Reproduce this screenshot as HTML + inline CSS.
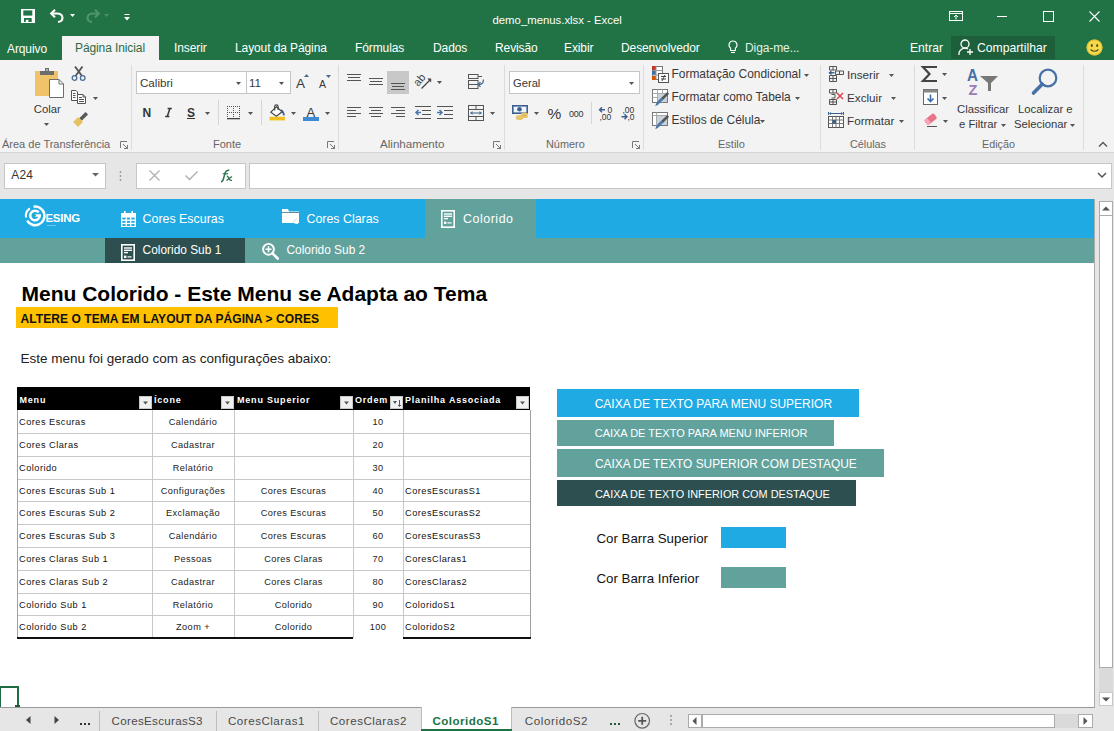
<!DOCTYPE html>
<html><head><meta charset="utf-8">
<style>
*{margin:0;padding:0;box-sizing:border-box}
html,body{width:1114px;height:731px;overflow:hidden;background:#fff;font-family:"Liberation Sans",sans-serif}
.a{position:absolute}
.t{position:absolute;white-space:nowrap;line-height:1}
svg{overflow:visible}
</style></head><body>
<div class="a" style="left:0px;top:0px;width:1114px;height:60px;background:#217346;"></div>
<div class="t " style="left:492.5px;top:14.99px;font-size:11.35px;color:#fff;font-weight:normal;">demo_menus.xlsx - Excel</div>
<svg class="a" style="left:21px;top:9px" width="14" height="14" viewBox="0 0 14 14"><rect x="0" y="0" width="14" height="14" fill="#fff"/><rect x="2.3" y="1.4" width="9" height="5.2" fill="#217346"/><rect x="3" y="9" width="7.7" height="4" fill="#217346"/><rect x="4.8" y="10.8" width="2.6" height="2.2" fill="#fff"/></svg>
<svg class="a" style="left:50px;top:9px" width="15" height="13" viewBox="0 0 15 13"><path d="M1.5 4.5H7.5A5.5 4.3 0 0 1 8 13" fill="none" stroke="#fff" stroke-width="2.1"/><path d="M5 0.8L1.2 4.5L5 8.2" fill="none" stroke="#fff" stroke-width="2.1"/></svg>
<svg class="a" style="left:69.5px;top:14px" width="5" height="3" viewBox="0 0 5 3"><path d="M0 0H5L2.5 3Z" fill="#fff"/></svg>
<svg class="a" style="left:84.5px;top:9px" width="15" height="13" viewBox="0 0 15 13"><path d="M13.5 4.5H7.5A5.5 4.3 0 0 0 7 13" fill="none" stroke="#4e9470" stroke-width="2.1"/><path d="M10 0.8L13.8 4.5L10 8.2" fill="none" stroke="#4e9470" stroke-width="2.1"/></svg>
<svg class="a" style="left:104px;top:14px" width="5" height="3" viewBox="0 0 5 3"><path d="M0 0H5L2.5 3Z" fill="#4f8f6a"/></svg>
<svg class="a" style="left:124px;top:14px" width="6" height="7" viewBox="0 0 6 7"><path d="M0.5 0.5H5.5" stroke="#fff" stroke-width="1"/><path d="M0 3H6L3 6.5Z" fill="#fff"/></svg>
<svg class="a" style="left:949px;top:11px" width="14" height="10" viewBox="0 0 14 10"><rect x="0.5" y="0.5" width="13" height="9" fill="none" stroke="#fff"/><path d="M0.5 2.5H13.5" stroke="#fff"/><path d="M7 8.5V4M5 6L7 4L9 6" fill="none" stroke="#fff"/></svg>
<div class="a" style="left:997px;top:16px;width:10px;height:1px;background:#fff;"></div>
<svg class="a" style="left:1043px;top:11px" width="11" height="11" viewBox="0 0 11 11"><rect x="0.5" y="0.5" width="10" height="10" fill="none" stroke="#fff"/></svg>
<svg class="a" style="left:1089px;top:11px" width="11" height="11" viewBox="0 0 11 11"><path d="M0.5 0.5L10.5 10.5M10.5 0.5L0.5 10.5" stroke="#fff" stroke-width="1.1"/></svg>
<div class="a" style="left:62px;top:36px;width:97px;height:24px;background:#f3f3f3;"></div>
<div class="t " style="left:7px;top:42.54px;font-size:12px;color:#fff;font-weight:normal;letter-spacing:-0.1px">Arquivo</div>
<div class="t " style="left:75px;top:41.64px;font-size:12px;color:#2e6a48;font-weight:normal;letter-spacing:-0.1px">Página Inicial</div>
<div class="t " style="left:174px;top:41.64px;font-size:12px;color:#fff;font-weight:normal;letter-spacing:-0.1px">Inserir</div>
<div class="t " style="left:235px;top:41.64px;font-size:12px;color:#fff;font-weight:normal;letter-spacing:-0.1px">Layout da Página</div>
<div class="t " style="left:355px;top:41.64px;font-size:12px;color:#fff;font-weight:normal;letter-spacing:-0.1px">Fórmulas</div>
<div class="t " style="left:433px;top:41.64px;font-size:12px;color:#fff;font-weight:normal;letter-spacing:-0.1px">Dados</div>
<div class="t " style="left:495px;top:41.64px;font-size:12px;color:#fff;font-weight:normal;letter-spacing:-0.1px">Revisão</div>
<div class="t " style="left:564px;top:41.64px;font-size:12px;color:#fff;font-weight:normal;letter-spacing:-0.1px">Exibir</div>
<div class="t " style="left:621px;top:41.64px;font-size:12px;color:#fff;font-weight:normal;letter-spacing:-0.1px">Desenvolvedor</div>
<div class="t " style="left:745px;top:41.64px;font-size:12px;color:#e0f0e6;font-weight:normal;letter-spacing:-0.1px">Diga-me...</div>
<svg class="a" style="left:728px;top:40px" width="10" height="14" viewBox="0 0 10 14"><path d="M5 1A4 4 0 0 0 2.6 8.2V10.5H7.4V8.2A4 4 0 0 0 5 1Z" fill="none" stroke="#fff" stroke-width="1.1"/><path d="M3 12.5H7" stroke="#fff" stroke-width="1.1"/></svg>
<div class="t " style="left:910px;top:41.96px;font-size:12.1px;color:#fff;font-weight:normal;">Entrar</div>
<div class="a" style="left:951px;top:36px;width:104px;height:23px;background:#1c5f3a;"></div>
<svg class="a" style="left:958px;top:39px" width="16" height="17" viewBox="0 0 16 17"><circle cx="7" cy="5" r="4" fill="none" stroke="#fff" stroke-width="1.3"/><path d="M1 16A6 6 0 0 1 10 10" fill="none" stroke="#fff" stroke-width="1.3"/><path d="M12 10V16M9 13H15" stroke="#fff" stroke-width="1.3"/></svg>
<div class="t " style="left:977px;top:42.37px;font-size:12.2px;color:#fff;font-weight:normal;">Compartilhar</div>
<svg class="a" style="left:1086px;top:39px" width="17" height="17" viewBox="0 0 17 17"><circle cx="8.5" cy="8.5" r="8" fill="#f5d94a"/><circle cx="8.5" cy="8.5" r="7.6" fill="none" stroke="#d9b52a" stroke-width="0.8"/><ellipse cx="5.8" cy="6.5" rx="1" ry="1.5" fill="#5a4a1a"/><ellipse cx="11.2" cy="6.5" rx="1" ry="1.5" fill="#5a4a1a"/><path d="M4.5 10.5Q8.5 14 12.5 10.5" fill="none" stroke="#5a4a1a" stroke-width="1.1"/></svg>
<div class="a" style="left:0px;top:60px;width:1114px;height:93px;background:#f3f3f3;"></div>
<div class="a" style="left:0px;top:152px;width:1114px;height:1px;background:#d4d4d4;"></div>
<div class="a" style="left:131px;top:65px;width:1px;height:85px;background:#dcdcdc;"></div>
<div class="a" style="left:338px;top:65px;width:1px;height:85px;background:#dcdcdc;"></div>
<div class="a" style="left:504px;top:65px;width:1px;height:85px;background:#dcdcdc;"></div>
<div class="a" style="left:643px;top:65px;width:1px;height:85px;background:#dcdcdc;"></div>
<div class="a" style="left:820px;top:65px;width:1px;height:85px;background:#dcdcdc;"></div>
<div class="a" style="left:914px;top:65px;width:1px;height:85px;background:#dcdcdc;"></div>
<div class="a" style="left:1083px;top:65px;width:1px;height:85px;background:#dcdcdc;"></div>
<div class="t " style="left:2px;top:138.69px;font-size:11px;color:#666;font-weight:normal;">Área de Transferência</div>
<div class="t " style="left:213px;top:138.69px;font-size:11px;color:#666;font-weight:normal;">Fonte</div>
<div class="t " style="left:380px;top:138.18px;font-size:11.6px;color:#666;font-weight:normal;">Alinhamento</div>
<div class="t " style="left:546px;top:138.77px;font-size:10.9px;color:#666;font-weight:normal;">Número</div>
<div class="t " style="left:718px;top:138.69px;font-size:11px;color:#666;font-weight:normal;">Estilo</div>
<div class="t " style="left:850px;top:138.86px;font-size:10.8px;color:#666;font-weight:normal;">Células</div>
<div class="t " style="left:982px;top:138.86px;font-size:10.8px;color:#666;font-weight:normal;">Edição</div>
<svg class="a" style="left:120px;top:141px" width="8" height="8" viewBox="0 0 8 8"><path d="M0.5 7V0.5H7" fill="none" stroke="#777"/><path d="M3 3L7.5 7.5M7.5 4V7.5H4" fill="none" stroke="#777"/></svg>
<svg class="a" style="left:327px;top:141px" width="8" height="8" viewBox="0 0 8 8"><path d="M0.5 7V0.5H7" fill="none" stroke="#777"/><path d="M3 3L7.5 7.5M7.5 4V7.5H4" fill="none" stroke="#777"/></svg>
<svg class="a" style="left:493px;top:141px" width="8" height="8" viewBox="0 0 8 8"><path d="M0.5 7V0.5H7" fill="none" stroke="#777"/><path d="M3 3L7.5 7.5M7.5 4V7.5H4" fill="none" stroke="#777"/></svg>
<svg class="a" style="left:632px;top:141px" width="8" height="8" viewBox="0 0 8 8"><path d="M0.5 7V0.5H7" fill="none" stroke="#777"/><path d="M3 3L7.5 7.5M7.5 4V7.5H4" fill="none" stroke="#777"/></svg>
<svg class="a" style="left:35px;top:68px" width="29" height="30" viewBox="0 0 29 30"><rect x="0" y="3" width="23" height="25" fill="#f0c26a"/><rect x="5" y="3" width="14" height="4" fill="#6d6d6d"/><rect x="10" y="0" width="4" height="4" fill="#6d6d6d"/><rect x="11.3" y="1.3" width="1.4" height="1.4" fill="#f3f3f3"/><path d="M14.5 11.5H24L28.5 16V29.5H14.5Z" fill="#fff" stroke="#6d6d6d"/><path d="M24 11.5V16H28.5" fill="none" stroke="#6d6d6d"/></svg>
<div class="t " style="left:33.8px;top:103.63px;font-size:11.3px;color:#383838;font-weight:normal;">Colar</div>
<svg class="a" style="left:44px;top:123px" width="5" height="3" viewBox="0 0 5 3"><path d="M0 0H5L2.5 3Z" fill="#555"/></svg>
<svg class="a" style="left:71px;top:66px" width="16" height="16" viewBox="0 0 16 16"><path d="M4 0.5L11 10M11.5 0.5L4.5 10" stroke="#555" stroke-width="1.9"/><circle cx="3.5" cy="12" r="2.3" fill="#f3f3f3" stroke="#4a6e94" stroke-width="1.3"/><circle cx="11.7" cy="12" r="2.3" fill="#f3f3f3" stroke="#4a6e94" stroke-width="1.3"/></svg>
<svg class="a" style="left:71px;top:90px" width="16" height="15" viewBox="0 0 16 15"><path d="M0.5 0.5H5L6.5 2V10.5H0.5Z" fill="#fff" stroke="#555"/><path d="M2 3.5H4.5M2 5.5H4.5M2 7.5H4.5" stroke="#555"/><path d="M6.5 4.5H12L14.5 7V13.5H6.5Z" fill="#fff" stroke="#555"/><path d="M12 4.5V7H14.5" fill="none" stroke="#555"/><path d="M8 7.5H11M8 9.5H13M8 11.5H13" stroke="#555"/></svg>
<svg class="a" style="left:93px;top:97px" width="5" height="3" viewBox="0 0 5 3"><path d="M0 0H5L2.5 3Z" fill="#555"/></svg>
<svg class="a" style="left:71px;top:112px" width="17" height="16" viewBox="0 0 17 16"><path d="M15.8 1.2L9.5 7.5" stroke="#5a5a5a" stroke-width="3.6"/><path d="M11.97 9.97L7.03 5.03L2.08 9.98L7.02 14.92Z" fill="#e6c262"/></svg>
<div class="a" style="left:136px;top:71px;width:111px;height:23px;background:#fff;border:1px solid #c6c6c6"></div>
<div class="a" style="left:246px;top:71px;width:45px;height:23px;background:#fff;border:1px solid #c6c6c6"></div>
<div class="t " style="left:140px;top:77.18px;font-size:11.6px;color:#383838;font-weight:normal;">Calibri</div>
<div class="t " style="left:249px;top:77.18px;font-size:11.6px;color:#383838;font-weight:normal;">11</div>
<svg class="a" style="left:236px;top:82px" width="5" height="3" viewBox="0 0 5 3"><path d="M0 0H5L2.5 3Z" fill="#555"/></svg>
<svg class="a" style="left:279px;top:82px" width="5" height="3" viewBox="0 0 5 3"><path d="M0 0H5L2.5 3Z" fill="#555"/></svg>
<div class="t " style="left:296px;top:76.57px;font-size:13.5px;color:#383838;font-weight:normal;">A</div>
<svg class="a" style="left:304px;top:74px" width="5" height="3" viewBox="0 0 5 3"><path d="M0 3H5L2.5 0Z" fill="#4a6a8a"/></svg>
<div class="t " style="left:319px;top:79.11px;font-size:10.5px;color:#383838;font-weight:normal;">A</div>
<svg class="a" style="left:326px;top:75px" width="5" height="3" viewBox="0 0 5 3"><path d="M0 0H5L2.5 3Z" fill="#4a6a8a"/></svg>
<div class="t " style="left:142.5px;top:106.84px;font-size:12px;color:#333;font-weight:bold;">N</div>
<svg class="a" style="left:165px;top:108px" width="7" height="9" viewBox="0 0 7 9"><path d="M2.6 0.5H6.8M0.2 8.5H4.4M4.9 0.5L2.3 8.5" stroke="#383838" stroke-width="1.5"/></svg>
<div class="t " style="left:187px;top:106.84px;font-size:12px;color:#333;font-weight:bold;">S</div>
<div class="a" style="left:187px;top:118px;width:8px;height:1px;background:#333;"></div>
<svg class="a" style="left:205px;top:112px" width="5" height="3" viewBox="0 0 5 3"><path d="M0 0H5L2.5 3Z" fill="#555"/></svg>
<div class="a" style="left:218px;top:100px;width:1px;height:25px;background:#d6d6d6;"></div>
<svg class="a" style="left:227px;top:106px" width="14" height="14" viewBox="0 0 14 14"><rect x="0" y="0" width="1" height="1" fill="#555"/><rect x="6" y="0" width="1" height="1" fill="#555"/><rect x="12" y="0" width="1" height="1" fill="#555"/><rect x="0" y="2" width="1" height="1" fill="#555"/><rect x="6" y="2" width="1" height="1" fill="#555"/><rect x="12" y="2" width="1" height="1" fill="#555"/><rect x="0" y="4" width="1" height="1" fill="#555"/><rect x="6" y="4" width="1" height="1" fill="#555"/><rect x="12" y="4" width="1" height="1" fill="#555"/><rect x="0" y="6" width="1" height="1" fill="#555"/><rect x="6" y="6" width="1" height="1" fill="#555"/><rect x="12" y="6" width="1" height="1" fill="#555"/><rect x="0" y="8" width="1" height="1" fill="#555"/><rect x="6" y="8" width="1" height="1" fill="#555"/><rect x="12" y="8" width="1" height="1" fill="#555"/><rect x="0" y="10" width="1" height="1" fill="#555"/><rect x="6" y="10" width="1" height="1" fill="#555"/><rect x="12" y="10" width="1" height="1" fill="#555"/><rect x="2" y="0" width="1" height="1" fill="#555"/><rect x="4" y="0" width="1" height="1" fill="#555"/><rect x="8" y="0" width="1" height="1" fill="#555"/><rect x="10" y="0" width="1" height="1" fill="#555"/><rect x="2" y="6" width="1" height="1" fill="#555"/><rect x="4" y="6" width="1" height="1" fill="#555"/><rect x="8" y="6" width="1" height="1" fill="#555"/><rect x="10" y="6" width="1" height="1" fill="#555"/><rect x="0" y="12" width="13" height="1.3" fill="#444"/></svg>
<svg class="a" style="left:248px;top:112px" width="5" height="3" viewBox="0 0 5 3"><path d="M0 0H5L2.5 3Z" fill="#555"/></svg>
<div class="a" style="left:261px;top:100px;width:1px;height:25px;background:#d6d6d6;"></div>
<svg class="a" style="left:269px;top:104px" width="17" height="17" viewBox="0 0 17 17"><path d="M1.9 8.2L7.4 2.7L13.1 7.7L7.4 12.2Z" fill="#fff" stroke="#444" stroke-width="1.2"/><path d="M5.7 6.5V2.6A1.7 1.7 0 0 1 9.1 2.6V6" fill="none" stroke="#444" stroke-width="1.2"/><path d="M12.3 5.2Q15.6 6.8 15.8 11.6H14.3Q13.8 9 12 7.5Z" fill="#3b5f8f"/><rect x="0.5" y="12.8" width="15.5" height="3.6" fill="#f0c020"/></svg>
<svg class="a" style="left:291px;top:112px" width="5" height="3" viewBox="0 0 5 3"><path d="M0 0H5L2.5 3Z" fill="#555"/></svg>
<div class="t " style="left:306.5px;top:105.80px;font-size:13px;color:#383838;font-weight:normal;">A</div>
<div class="a" style="left:303px;top:117px;width:16px;height:4px;background:#3d8bd4;"></div>
<svg class="a" style="left:325px;top:112px" width="5" height="3" viewBox="0 0 5 3"><path d="M0 0H5L2.5 3Z" fill="#555"/></svg>
<svg class="a" style="left:347px;top:74px" width="15" height="9" viewBox="0 0 15 9"><rect x="0" y="0" width="14" height="1" fill="#555"/><rect x="1" y="3" width="12" height="1" fill="#555"/><rect x="0" y="6" width="14" height="1" fill="#555"/></svg>
<svg class="a" style="left:369px;top:78px" width="15" height="9" viewBox="0 0 15 9"><rect x="0" y="0" width="14" height="1" fill="#555"/><rect x="1" y="3" width="12" height="1" fill="#555"/><rect x="0" y="6" width="14" height="1" fill="#555"/></svg>
<div class="a" style="left:387px;top:71px;width:22px;height:23px;background:#c8c8c8;"></div>
<svg class="a" style="left:391px;top:83px" width="15" height="9" viewBox="0 0 15 9"><rect x="0" y="0" width="14" height="1" fill="#555"/><rect x="1" y="3" width="12" height="1" fill="#555"/><rect x="0" y="6" width="14" height="1" fill="#555"/></svg>
<svg class="a" style="left:415px;top:73px" width="17" height="17" viewBox="0 0 17 17"><text x="0" y="0" font-size="11" fill="#444" font-family="Liberation Sans" transform="translate(3.2 14) rotate(-50)">ab</text><path d="M6.5 15.5L15.5 6.5" stroke="#444" stroke-width="1.2"/><path d="M12.2 5.5H16.2V9.5Z" fill="#444"/></svg>
<svg class="a" style="left:437px;top:81px" width="5" height="3" viewBox="0 0 5 3"><path d="M0 0H5L2.5 3Z" fill="#555"/></svg>
<svg class="a" style="left:468px;top:74px" width="17" height="16" viewBox="0 0 17 16"><rect x="0.5" y="0.5" width="9.5" height="4" fill="none" stroke="#555"/><path d="M10 2.5H14" stroke="#555"/><rect x="0.5" y="6.5" width="9.5" height="8" fill="none" stroke="#555"/><path d="M0.5 10.5H10" stroke="#555"/><path d="M15.5 5.5Q15.5 10.5 11 10.5" fill="none" stroke="#4a6e94" stroke-width="1.3"/><path d="M12.5 8.3L9.8 10.5L12.5 12.7" fill="none" stroke="#4a6e94" stroke-width="1.3"/></svg>
<svg class="a" style="left:347px;top:107px" width="15" height="12" viewBox="0 0 15 12"><rect x="0" y="0" width="14" height="1" fill="#555"/><rect x="0" y="3" width="9" height="1" fill="#555"/><rect x="0" y="6" width="14" height="1" fill="#555"/><rect x="0" y="9" width="9" height="1" fill="#555"/></svg>
<svg class="a" style="left:369px;top:107px" width="15" height="12" viewBox="0 0 15 12"><rect x="0" y="0" width="14" height="1" fill="#555"/><rect x="2" y="3" width="10" height="1" fill="#555"/><rect x="0" y="6" width="14" height="1" fill="#555"/><rect x="2" y="9" width="10" height="1" fill="#555"/></svg>
<svg class="a" style="left:391px;top:107px" width="15" height="12" viewBox="0 0 15 12"><rect x="0" y="0" width="14" height="1" fill="#555"/><rect x="5" y="3" width="9" height="1" fill="#555"/><rect x="0" y="6" width="14" height="1" fill="#555"/><rect x="5" y="9" width="9" height="1" fill="#555"/></svg>
<svg class="a" style="left:415px;top:106px" width="17" height="14" viewBox="0 0 17 14"><path d="M0 0.5H16M7 4.5H16M7 8.5H16M0 12.5H16" stroke="#555"/><path d="M1 6.5H6M3.5 4L1 6.5L3.5 9" fill="none" stroke="#4a78ac" stroke-width="1.5"/></svg>
<svg class="a" style="left:437px;top:106px" width="17" height="14" viewBox="0 0 17 14"><path d="M0 0.5H16M7 4.5H16M7 8.5H16M0 12.5H16" stroke="#555"/><path d="M0 6.5H5M2.5 4L5 6.5L2.5 9" fill="none" stroke="#4a78ac" stroke-width="1.5"/></svg>
<svg class="a" style="left:468px;top:105px" width="16" height="16" viewBox="0 0 16 16"><rect x="0.5" y="0.5" width="15" height="15" fill="none" stroke="#555"/><path d="M0.5 4.5H15.5M0.5 11.5H15.5M8 0.5V4.5M8 11.5V15.5" stroke="#555"/><path d="M2.5 8H13.5" stroke="#4a6e94" stroke-width="1.1"/><path d="M4.5 6L2.2 8L4.5 10ZM11.5 6L13.8 8L11.5 10Z" fill="#4a6e94"/></svg>
<svg class="a" style="left:490px;top:112px" width="5" height="3" viewBox="0 0 5 3"><path d="M0 0H5L2.5 3Z" fill="#555"/></svg>
<div class="a" style="left:509px;top:71px;width:131px;height:23px;background:#fff;border:1px solid #c6c6c6"></div>
<div class="t " style="left:513px;top:77.52px;font-size:11.2px;color:#383838;font-weight:normal;">Geral</div>
<svg class="a" style="left:629px;top:82px" width="5" height="3" viewBox="0 0 5 3"><path d="M0 0H5L2.5 3Z" fill="#555"/></svg>
<svg class="a" style="left:512px;top:105px" width="17" height="17" viewBox="0 0 17 17"><rect x="0.8" y="0.8" width="14.4" height="7.4" fill="#eef4fa" stroke="#3b5f8f" stroke-width="1.6"/><circle cx="7.5" cy="4.3" r="2.3" fill="#3b5f8f"/><ellipse cx="12.5" cy="9" rx="3.5" ry="1.6" fill="#e8c46a"/><ellipse cx="12.5" cy="11.5" rx="3.5" ry="1.6" fill="#e8c46a"/><ellipse cx="7.5" cy="12.5" rx="3.8" ry="2.6" fill="#e8c46a"/><ellipse cx="12.5" cy="10.2" rx="3.5" ry="0.4" fill="#c9a24a"/></svg>
<svg class="a" style="left:534px;top:112px" width="5" height="3" viewBox="0 0 5 3"><path d="M0 0H5L2.5 3Z" fill="#555"/></svg>
<div class="t " style="left:547.5px;top:106.18px;font-size:15.5px;color:#383838;font-weight:normal;">%</div>
<div class="t " style="left:569px;top:109.68px;font-size:9px;color:#333;font-weight:normal;letter-spacing:-0.2px">000</div>
<div class="a" style="left:591px;top:102px;width:1px;height:22px;background:#d6d6d6;"></div>
<svg class="a" style="left:599px;top:106px" width="15" height="14" viewBox="0 0 15 14"><path d="M0.5 3.8H6M3 1.3L0.5 3.8L3 6.3" fill="none" stroke="#3b5f8f" stroke-width="1.4"/><text x="8.5" y="6.5" font-size="8.5" fill="#333" font-family="Liberation Sans">0</text><text x="0.5" y="13.5" font-size="8.5" fill="#333" font-family="Liberation Sans">,00</text></svg>
<svg class="a" style="left:621px;top:106px" width="15" height="14" viewBox="0 0 15 14"><text x="1.5" y="6.5" font-size="8.5" fill="#333" font-family="Liberation Sans">,00</text><path d="M0.5 10.8H6M3.5 8.3L6 10.8L3.5 13.3" fill="none" stroke="#3b5f8f" stroke-width="1.4"/><text x="6.5" y="13.5" font-size="8.5" fill="#333" font-family="Liberation Sans">,0</text></svg>
<svg class="a" style="left:652px;top:66px" width="17" height="17" viewBox="0 0 17 17"><rect x="0.5" y="0.5" width="10" height="13" fill="#fff" stroke="#777"/><rect x="0" y="0" width="4" height="4" fill="#c0392b"/><rect x="0" y="5" width="4" height="4" fill="#3d6fa8"/><rect x="0" y="10" width="4" height="4" fill="#d35400"/><path d="M4 0.5V13.5M0.5 4.5H10.5M0.5 9H10.5" stroke="#999"/><rect x="6.5" y="7.5" width="10" height="9" fill="#fff" stroke="#555"/><path d="M9 10.5H14M9 13H14M13 9L10 15" stroke="#444"/></svg>
<div class="t " style="left:671.5px;top:68.58px;font-size:11.95px;color:#383838;font-weight:normal;">Formatação Condicional</div>
<svg class="a" style="left:804px;top:74px" width="5" height="3" viewBox="0 0 5 3"><path d="M0 0H5L2.5 3Z" fill="#555"/></svg>
<svg class="a" style="left:652px;top:89px" width="18" height="18" viewBox="0 0 18 18"><rect x="0.5" y="0.5" width="15" height="13" fill="#fff" stroke="#777"/><path d="M0.5 4.5H15.5M0.5 8.5H15.5M5.5 0.5V13.5M10.5 0.5V13.5" stroke="#aaa"/><rect x="6" y="5" width="9" height="8" fill="#c9d3de"/><path d="M16.2 3.8L10 10" stroke="#555" stroke-width="2.6"/><path d="M11.2 10.8L7.8 14Q6 16.5 3.2 17.2Q3.8 14 6.2 11.5L9.2 8.8Z" fill="#4a78a8"/></svg>
<div class="t " style="left:671.5px;top:91.88px;font-size:11.95px;color:#383838;font-weight:normal;">Formatar como Tabela</div>
<svg class="a" style="left:795px;top:97px" width="5" height="3" viewBox="0 0 5 3"><path d="M0 0H5L2.5 3Z" fill="#555"/></svg>
<svg class="a" style="left:652px;top:112px" width="18" height="18" viewBox="0 0 18 18"><rect x="0.5" y="0.5" width="15" height="13" fill="#fff" stroke="#777"/><rect x="5" y="4" width="10" height="9" fill="#c9d3de"/><path d="M0.5 3.5H15.5M4.5 0.5V13.5" stroke="#aaa"/><path d="M16.2 3.8L10 10" stroke="#555" stroke-width="2.6"/><path d="M11.2 10.8L7.8 14Q6 16.5 3.2 17.2Q3.8 14 6.2 11.5L9.2 8.8Z" fill="#4a78a8"/></svg>
<div class="t " style="left:671.5px;top:114.88px;font-size:11.95px;color:#383838;font-weight:normal;">Estilos de Célula</div>
<svg class="a" style="left:760px;top:120px" width="5" height="3" viewBox="0 0 5 3"><path d="M0 0H5L2.5 3Z" fill="#555"/></svg>
<svg class="a" style="left:828px;top:66px" width="16" height="16" viewBox="0 0 16 16"><path d="M1.5 0.5H8.5V4H1.5ZM5 0.5V4M7.5 5H15.5V8.5H7.5ZM11.5 5V8.5M1.5 9.5H8.5V15.5H1.5ZM1.5 12.5H8.5M5 9.5V15.5" fill="none" stroke="#555"/><path d="M1 6.75H6.5" stroke="#3b5f8f" stroke-width="1.4"/><path d="M3.5 4.2L0.5 6.75L3.5 9.3Z" fill="#3b5f8f"/></svg>
<div class="t " style="left:847px;top:68.80px;font-size:11.7px;color:#383838;font-weight:normal;">Inserir</div>
<svg class="a" style="left:889px;top:74px" width="5" height="3" viewBox="0 0 5 3"><path d="M0 0H5L2.5 3Z" fill="#555"/></svg>
<svg class="a" style="left:828px;top:89px" width="16" height="16" viewBox="0 0 16 16"><path d="M1.5 0.5H8.5V4H1.5ZM5 0.5V4M3.5 5.5H7V9H3.5M1.5 10.5H8.5V15.5H1.5ZM1.5 13H8.5M5 10.5V15.5" fill="none" stroke="#555"/><path d="M9 4L15 10M15 4L9 10" stroke="#d9434e" stroke-width="1.5"/></svg>
<div class="t " style="left:847px;top:92.10px;font-size:11.7px;color:#383838;font-weight:normal;">Excluir</div>
<svg class="a" style="left:891px;top:97px" width="5" height="3" viewBox="0 0 5 3"><path d="M0 0H5L2.5 3Z" fill="#555"/></svg>
<svg class="a" style="left:828px;top:112px" width="16" height="16" viewBox="0 0 16 16"><rect x="0.5" y="4.5" width="15" height="11" fill="#fff" stroke="#555"/><path d="M0.5 8H15.5M0.5 11.5H15.5M4.5 4.5V15.5M8 4.5V15.5M11.5 4.5V15.5" stroke="#777"/><rect x="4.5" y="8" width="3.5" height="3.5" fill="#3b5f8f"/><path d="M2.5 1.5H13.5" stroke="#3b5f8f"/><path d="M0.5 0V3M15.5 0V3" stroke="#3b5f8f"/><path d="M3 0L1 1.5L3 3ZM13 0L15 1.5L13 3Z" fill="#3b5f8f"/></svg>
<div class="t " style="left:847px;top:115.10px;font-size:11.7px;color:#383838;font-weight:normal;">Formatar</div>
<svg class="a" style="left:899px;top:120px" width="5" height="3" viewBox="0 0 5 3"><path d="M0 0H5L2.5 3Z" fill="#555"/></svg>
<svg class="a" style="left:922px;top:66px" width="16" height="16" viewBox="0 0 16 16"><path d="M15 1H1L7.5 8L1 15H15" fill="none" stroke="#444" stroke-width="2.2" stroke-linejoin="miter"/></svg>
<svg class="a" style="left:942px;top:73px" width="5" height="3" viewBox="0 0 5 3"><path d="M0 0H5L2.5 3Z" fill="#555"/></svg>
<svg class="a" style="left:923px;top:89px" width="15" height="16" viewBox="0 0 15 16"><rect x="0.5" y="0.5" width="14" height="15" fill="#fff" stroke="#666"/><rect x="0.5" y="0.5" width="14" height="3" fill="#888"/><path d="M7.5 5.5V12.5M4.5 9.5L7.5 12.5L10.5 9.5" fill="none" stroke="#3d6fa8" stroke-width="1.6"/></svg>
<svg class="a" style="left:942px;top:97px" width="5" height="3" viewBox="0 0 5 3"><path d="M0 0H5L2.5 3Z" fill="#555"/></svg>
<svg class="a" style="left:923px;top:112px" width="15" height="15" viewBox="0 0 15 15"><g transform="rotate(-38 7.5 7)"><rect x="1.5" y="4" width="12" height="6.5" rx="1.5" fill="#e8758a"/><rect x="1.5" y="4" width="4" height="6.5" rx="1" fill="#f3a9b6"/></g><path d="M4 14.5H14" stroke="#555"/></svg>
<svg class="a" style="left:943px;top:120px" width="5" height="3" viewBox="0 0 5 3"><path d="M0 0H5L2.5 3Z" fill="#555"/></svg>
<div class="t " style="left:967.3px;top:67.33px;font-size:16.5px;color:#4670a6;font-weight:bold;transform:scaleX(0.92);transform-origin:0 0">A</div>
<div class="t " style="left:968.5px;top:82.93px;font-size:14.5px;color:#9a7cb6;font-weight:bold;">Z</div>
<svg class="a" style="left:980px;top:76px" width="18" height="16" viewBox="0 0 18 16"><path d="M0 0H18L11 7V15H8V7Z" fill="#777"/></svg>
<div class="t " style="left:957px;top:103.63px;font-size:11.3px;color:#383838;font-weight:normal;">Classificar</div>
<div class="t " style="left:959px;top:119.43px;font-size:11.3px;color:#383838;font-weight:normal;">e Filtrar</div>
<svg class="a" style="left:1001px;top:124px" width="5" height="3" viewBox="0 0 5 3"><path d="M0 0H5L2.5 3Z" fill="#555"/></svg>
<svg class="a" style="left:1031px;top:68px" width="28" height="27" viewBox="0 0 28 27"><circle cx="17" cy="10" r="8.3" fill="none" stroke="#4670a6" stroke-width="2.2"/><path d="M11.2 16.2L2.5 25" stroke="#4670a6" stroke-width="3.6" stroke-linecap="round"/></svg>
<div class="t " style="left:1018px;top:103.63px;font-size:11.3px;color:#383838;font-weight:normal;">Localizar e</div>
<div class="t " style="left:1014px;top:119.43px;font-size:11.3px;color:#383838;font-weight:normal;">Selecionar</div>
<svg class="a" style="left:1070px;top:124px" width="5" height="3" viewBox="0 0 5 3"><path d="M0 0H5L2.5 3Z" fill="#555"/></svg>
<svg class="a" style="left:1098px;top:141px" width="10" height="6" viewBox="0 0 10 6"><path d="M1 5.5L5 1.5L9 5.5" fill="none" stroke="#555" stroke-width="1.4"/></svg>
<div class="a" style="left:0px;top:153px;width:1114px;height:46px;background:#e6e6e6;"></div>
<div class="a" style="left:4px;top:163px;width:102px;height:26px;background:#fff;border:1px solid #c6c6c6"></div>
<div class="t " style="left:11.3px;top:170.43px;font-size:11.9px;color:#333;font-weight:normal;letter-spacing:0.2px">A24</div>
<svg class="a" style="left:92px;top:173px" width="7" height="4" viewBox="0 0 7 4"><path d="M0 0H7L3.5 3.5Z" fill="#666"/></svg>
<svg class="a" style="left:119px;top:171px" width="3" height="10" viewBox="0 0 3 10"><circle cx="1.5" cy="1" r="0.9" fill="#999"/><circle cx="1.5" cy="5" r="0.9" fill="#999"/><circle cx="1.5" cy="9" r="0.9" fill="#999"/></svg>
<div class="a" style="left:136px;top:163px;width:110px;height:26px;background:#fff;border:1px solid #c6c6c6"></div>
<svg class="a" style="left:149px;top:170px" width="11" height="11" viewBox="0 0 11 11"><path d="M0.5 0.5L10.5 10.5M10.5 0.5L0.5 10.5" stroke="#b0b0b0" stroke-width="1.3"/></svg>
<svg class="a" style="left:185px;top:170px" width="13" height="11" viewBox="0 0 13 11"><path d="M0.5 5.5L4.5 9.5L12.5 1.5" fill="none" stroke="#b0b0b0" stroke-width="1.4"/></svg>
<svg class="a" style="left:220px;top:169px" width="13" height="14" viewBox="0 0 13 14"><path d="M1 12.8Q2.8 12.8 3.8 8.5L5.3 3.5Q6.3 0.8 9.3 1.3" fill="none" stroke="#2b7350" stroke-width="1.5"/><path d="M2.8 4.8H8" stroke="#2b7350" stroke-width="1.2"/><path d="M6.8 7.3Q8 7 9 9.5T12 11.3M12 7.5L6.5 11.5" fill="none" stroke="#2b7350" stroke-width="1.3"/></svg>
<div class="a" style="left:249px;top:163px;width:863px;height:26px;background:#fff;border:1px solid #c6c6c6"></div>
<svg class="a" style="left:1097px;top:172px" width="10" height="6" viewBox="0 0 10 6"><path d="M1 1L5 5L9 1" fill="none" stroke="#555" stroke-width="1.5"/></svg>
<div class="a" style="left:0px;top:199px;width:1114px;height:509px;background:#fff;"></div>
<div class="a" style="left:1095px;top:199px;width:19px;height:509px;background:#e6e6e6;"></div>
<div class="a" style="left:0px;top:199px;width:1095px;height:39px;background:#1faae4;"></div>
<div class="a" style="left:0px;top:238px;width:1095px;height:25px;background:#62a29c;"></div>
<div class="a" style="left:425px;top:199px;width:111px;height:39px;background:#62a29c;"></div>
<div class="a" style="left:105px;top:238px;width:140px;height:25px;background:#2d4f4f;"></div>
<div class="a" style="left:1094px;top:199px;width:1px;height:509px;background:#ababab;"></div>
<svg class="a" style="left:25px;top:205px" width="20" height="21" viewBox="0 0 20 21"><path d="M8.6 1.7A9.3 9.3 0 1 1 2.15 15.55" fill="none" stroke="#fff" stroke-width="2.5"/><path d="M1.04 12.5A9.3 9.3 0 0 1 4.87 3.28" fill="none" stroke="#fff" stroke-width="2.1"/><path d="M13.68 7.4A4.8 4.8 0 1 0 14.8 10.5H10" fill="none" stroke="#fff" stroke-width="2.5"/><circle cx="10" cy="10.5" r="1.1" fill="#3fae6a"/></svg>
<div class="t " style="left:45.5px;top:212.77px;font-size:11.5px;color:#fff;font-weight:bold;letter-spacing:-0.3px">ESING</div>
<div class="a" style="left:47px;top:224.5px;width:9px;height:1px;background:#6cc4ec;"></div>
<svg class="a" style="left:121px;top:211px" width="15" height="16" viewBox="0 0 15 16"><rect x="0" y="2" width="15" height="14" fill="#fff"/><rect x="3" y="0" width="1.6" height="3" fill="#fff"/><rect x="10.4" y="0" width="1.6" height="3" fill="#fff"/><rect x="1.4" y="6.6" width="3.2" height="1.9" fill="#1faae4"/><rect x="5.9" y="6.6" width="3.2" height="1.9" fill="#1faae4"/><rect x="10.4" y="6.6" width="3.2" height="1.9" fill="#1faae4"/><rect x="1.4" y="9.9" width="3.2" height="1.9" fill="#1faae4"/><rect x="5.9" y="9.9" width="3.2" height="1.9" fill="#1faae4"/><rect x="10.4" y="9.9" width="3.2" height="1.9" fill="#1faae4"/><rect x="1.4" y="13.1" width="3.2" height="1.9" fill="#1faae4"/><rect x="5.9" y="13.1" width="3.2" height="1.9" fill="#1faae4"/><rect x="10.4" y="13.1" width="3.2" height="1.9" fill="#1faae4"/></svg>
<div class="t " style="left:142.6px;top:212.90px;font-size:12.4px;color:#fff;font-weight:normal;">Cores Escuras</div>
<svg class="a" style="left:282px;top:208.5px" width="18" height="16" viewBox="0 0 18 16"><path d="M0 0H6L7 2.5H17V14H0Z" fill="#fff"/><path d="M0 3.5H17" stroke="#3f6f86" stroke-width="0.8"/><path d="M12 14.5L16 10.5V15Z" fill="#fff"/><path d="M10.5 13.5L15 9.5" stroke="#8cc" stroke-width="0.6"/></svg>
<div class="t " style="left:306.5px;top:212.90px;font-size:12.4px;color:#fff;font-weight:normal;">Cores Claras</div>
<svg class="a" style="left:441px;top:210px" width="14" height="18" viewBox="0 0 14 18"><rect x="0.8" y="0.8" width="12.4" height="16.4" fill="none" stroke="#fff" stroke-width="1.6"/><rect x="3" y="3.3" width="8" height="1.4" fill="#fff"/><rect x="3" y="5.6" width="8" height="1.4" fill="#fff"/><rect x="3" y="7.9" width="4" height="1.4" fill="#fff"/><rect x="3" y="11.6" width="2.4" height="2.4" fill="#fff"/><rect x="6.5" y="12.3" width="4" height="1.2" fill="#fff"/></svg>
<div class="t " style="left:463px;top:213.10px;font-size:12.4px;color:#fff;font-weight:normal;letter-spacing:0.55px">Colorido</div>
<svg class="a" style="left:121px;top:244px" width="14" height="17" viewBox="0 0 14 17"><rect x="0.8" y="0.8" width="12.4" height="15.4" fill="none" stroke="#fff" stroke-width="1.6"/><rect x="3" y="3.3" width="8" height="1.4" fill="#fff"/><rect x="3" y="5.6" width="8" height="1.4" fill="#fff"/><rect x="3" y="7.9" width="4" height="1.4" fill="#fff"/><rect x="3" y="11.6" width="2.4" height="2.4" fill="#fff"/><rect x="6.5" y="12.3" width="4" height="1.2" fill="#fff"/></svg>
<div class="t " style="left:142.6px;top:245.43px;font-size:11.9px;color:#fff;font-weight:normal;">Colorido Sub 1</div>
<svg class="a" style="left:262px;top:243px" width="17" height="17" viewBox="0 0 17 17"><circle cx="6.5" cy="6.3" r="5.4" fill="none" stroke="#fff" stroke-width="1.9"/><path d="M6.5 3.3V9.3M3.5 6.3H9.5" stroke="#fff" stroke-width="1.6"/><path d="M10.5 10.3L15.7 15.5" stroke="#fff" stroke-width="2.6" stroke-linecap="round"/></svg>
<div class="t " style="left:286.5px;top:245.43px;font-size:11.9px;color:#fff;font-weight:normal;">Colorido Sub 2</div>
<div class="t " style="left:21.5px;top:282.62px;font-size:21px;color:#000;font-weight:bold;">Menu Colorido - Este Menu se Adapta ao Tema</div>
<div class="a" style="left:16px;top:307px;width:322px;height:21px;background:#ffc000;"></div>
<div class="t " style="left:20.5px;top:312.64px;font-size:12px;color:#111;font-weight:bold;letter-spacing:0.07px">ALTERE O TEMA EM LAYOUT DA PÁGINA &gt; CORES</div>
<div class="t " style="left:20.5px;top:351.57px;font-size:13.5px;color:#222;font-weight:normal;">Este menu foi gerado com as configurações abaixo:</div>
<div class="a" style="left:17px;top:387px;width:513px;height:23px;background:#000;"></div>
<div class="a" style="left:152px;top:410px;width:1px;height:228px;background:#c8c8c8;"></div>
<div class="a" style="left:234px;top:410px;width:1px;height:228px;background:#c8c8c8;"></div>
<div class="a" style="left:353px;top:410px;width:1px;height:228px;background:#c8c8c8;"></div>
<div class="a" style="left:403px;top:410px;width:1px;height:228px;background:#c8c8c8;"></div>
<div class="a" style="left:17px;top:410px;width:1px;height:228px;background:#a0a0a0;"></div>
<div class="a" style="left:530px;top:410px;width:1px;height:228px;background:#a0a0a0;"></div>
<div class="a" style="left:18px;top:433px;width:512px;height:1px;background:#c8c8c8;"></div>
<div class="a" style="left:18px;top:456px;width:512px;height:1px;background:#c8c8c8;"></div>
<div class="a" style="left:18px;top:479px;width:512px;height:1px;background:#c8c8c8;"></div>
<div class="a" style="left:18px;top:501px;width:512px;height:1px;background:#c8c8c8;"></div>
<div class="a" style="left:18px;top:524px;width:512px;height:1px;background:#c8c8c8;"></div>
<div class="a" style="left:18px;top:547px;width:512px;height:1px;background:#c8c8c8;"></div>
<div class="a" style="left:18px;top:570px;width:512px;height:1px;background:#c8c8c8;"></div>
<div class="a" style="left:18px;top:593px;width:512px;height:1px;background:#c8c8c8;"></div>
<div class="a" style="left:18px;top:615px;width:512px;height:1px;background:#c8c8c8;"></div>
<div class="a" style="left:17px;top:637px;width:336px;height:2px;background:#111;"></div>
<div class="a" style="left:403px;top:637px;width:128px;height:2px;background:#111;"></div>
<div class="t " style="left:19.5px;top:396.18px;font-size:9px;color:#fff;font-weight:bold;letter-spacing:0.8px">Menu</div>
<div class="t " style="left:154px;top:396.18px;font-size:9px;color:#fff;font-weight:bold;letter-spacing:0.8px">Ícone</div>
<div class="t " style="left:237px;top:396.18px;font-size:9px;color:#fff;font-weight:bold;letter-spacing:0.8px">Menu Superior</div>
<div class="t " style="left:355px;top:396.18px;font-size:9px;color:#fff;font-weight:bold;letter-spacing:0.8px">Ordem</div>
<div class="t " style="left:405px;top:396.18px;font-size:9px;color:#fff;font-weight:bold;letter-spacing:0.8px">Planilha Associada</div>
<svg class="a" style="left:139px;top:396px" width="13" height="13" viewBox="0 0 13 13"><rect x="0" y="0" width="13" height="13" fill="#f0f0f0"/><rect x="0.5" y="0.5" width="12" height="12" fill="none" stroke="#c8c8c8"/><path d="M4 5.5H9L6.5 8.5Z" fill="#555"/></svg>
<svg class="a" style="left:221px;top:396px" width="13" height="13" viewBox="0 0 13 13"><rect x="0" y="0" width="13" height="13" fill="#f0f0f0"/><rect x="0.5" y="0.5" width="12" height="12" fill="none" stroke="#c8c8c8"/><path d="M4 5.5H9L6.5 8.5Z" fill="#555"/></svg>
<svg class="a" style="left:340px;top:396px" width="13" height="13" viewBox="0 0 13 13"><rect x="0" y="0" width="13" height="13" fill="#f0f0f0"/><rect x="0.5" y="0.5" width="12" height="12" fill="none" stroke="#c8c8c8"/><path d="M4 5.5H9L6.5 8.5Z" fill="#555"/></svg>
<svg class="a" style="left:390px;top:396px" width="13" height="13" viewBox="0 0 13 13"><rect x="0" y="0" width="13" height="13" fill="#f0f0f0"/><rect x="0.5" y="0.5" width="12" height="12" fill="none" stroke="#c8c8c8"/><path d="M3 5H7L5 8Z" fill="#555"/><path d="M9.5 4V10M8 9L9.5 10.5L11 9" fill="none" stroke="#555"/></svg>
<svg class="a" style="left:516px;top:396px" width="13" height="13" viewBox="0 0 13 13"><rect x="0" y="0" width="13" height="13" fill="#f0f0f0"/><rect x="0.5" y="0.5" width="12" height="12" fill="none" stroke="#c8c8c8"/><path d="M4 5.5H9L6.5 8.5Z" fill="#555"/></svg>
<div class="t " style="left:19px;top:418.11px;font-size:9.2px;color:#111;font-weight:normal;letter-spacing:0.5px">Cores Escuras</div>
<div class="t" style="left:152px;width:82px;text-align:center;top:418.11px;font-size:9.2px;color:#222;letter-spacing:0.4px">Calendário</div>
<div class="t" style="left:353px;width:50px;text-align:center;top:418.11px;font-size:9.2px;color:#222;letter-spacing:0.4px">10</div>
<div class="t " style="left:19px;top:441.11px;font-size:9.2px;color:#111;font-weight:normal;letter-spacing:0.5px">Cores Claras</div>
<div class="t" style="left:152px;width:82px;text-align:center;top:441.11px;font-size:9.2px;color:#222;letter-spacing:0.4px">Cadastrar</div>
<div class="t" style="left:353px;width:50px;text-align:center;top:441.11px;font-size:9.2px;color:#222;letter-spacing:0.4px">20</div>
<div class="t " style="left:19px;top:464.11px;font-size:9.2px;color:#111;font-weight:normal;letter-spacing:0.5px">Colorido</div>
<div class="t" style="left:152px;width:82px;text-align:center;top:464.11px;font-size:9.2px;color:#222;letter-spacing:0.4px">Relatório</div>
<div class="t" style="left:353px;width:50px;text-align:center;top:464.11px;font-size:9.2px;color:#222;letter-spacing:0.4px">30</div>
<div class="t " style="left:19px;top:487.11px;font-size:9.2px;color:#111;font-weight:normal;letter-spacing:0.5px">Cores Escuras Sub 1</div>
<div class="t" style="left:152px;width:82px;text-align:center;top:487.11px;font-size:9.2px;color:#222;letter-spacing:0.4px">Configurações</div>
<div class="t" style="left:234px;width:119px;text-align:center;top:487.11px;font-size:9.2px;color:#222;letter-spacing:0.4px">Cores Escuras</div>
<div class="t" style="left:353px;width:50px;text-align:center;top:487.11px;font-size:9.2px;color:#222;letter-spacing:0.4px">40</div>
<div class="t " style="left:405px;top:487.11px;font-size:9.2px;color:#111;font-weight:normal;letter-spacing:0.5px">CoresEscurasS1</div>
<div class="t " style="left:19px;top:509.11px;font-size:9.2px;color:#111;font-weight:normal;letter-spacing:0.5px">Cores Escuras Sub 2</div>
<div class="t" style="left:152px;width:82px;text-align:center;top:509.11px;font-size:9.2px;color:#222;letter-spacing:0.4px">Exclamação</div>
<div class="t" style="left:234px;width:119px;text-align:center;top:509.11px;font-size:9.2px;color:#222;letter-spacing:0.4px">Cores Escuras</div>
<div class="t" style="left:353px;width:50px;text-align:center;top:509.11px;font-size:9.2px;color:#222;letter-spacing:0.4px">50</div>
<div class="t " style="left:405px;top:509.11px;font-size:9.2px;color:#111;font-weight:normal;letter-spacing:0.5px">CoresEscurasS2</div>
<div class="t " style="left:19px;top:532.11px;font-size:9.2px;color:#111;font-weight:normal;letter-spacing:0.5px">Cores Escuras Sub 3</div>
<div class="t" style="left:152px;width:82px;text-align:center;top:532.11px;font-size:9.2px;color:#222;letter-spacing:0.4px">Calendário</div>
<div class="t" style="left:234px;width:119px;text-align:center;top:532.11px;font-size:9.2px;color:#222;letter-spacing:0.4px">Cores Escuras</div>
<div class="t" style="left:353px;width:50px;text-align:center;top:532.11px;font-size:9.2px;color:#222;letter-spacing:0.4px">60</div>
<div class="t " style="left:405px;top:532.11px;font-size:9.2px;color:#111;font-weight:normal;letter-spacing:0.5px">CoresEscurasS3</div>
<div class="t " style="left:19px;top:555.11px;font-size:9.2px;color:#111;font-weight:normal;letter-spacing:0.5px">Cores Claras Sub 1</div>
<div class="t" style="left:152px;width:82px;text-align:center;top:555.11px;font-size:9.2px;color:#222;letter-spacing:0.4px">Pessoas</div>
<div class="t" style="left:234px;width:119px;text-align:center;top:555.11px;font-size:9.2px;color:#222;letter-spacing:0.4px">Cores Claras</div>
<div class="t" style="left:353px;width:50px;text-align:center;top:555.11px;font-size:9.2px;color:#222;letter-spacing:0.4px">70</div>
<div class="t " style="left:405px;top:555.11px;font-size:9.2px;color:#111;font-weight:normal;letter-spacing:0.5px">CoresClaras1</div>
<div class="t " style="left:19px;top:578.11px;font-size:9.2px;color:#111;font-weight:normal;letter-spacing:0.5px">Cores Claras Sub 2</div>
<div class="t" style="left:152px;width:82px;text-align:center;top:578.11px;font-size:9.2px;color:#222;letter-spacing:0.4px">Cadastrar</div>
<div class="t" style="left:234px;width:119px;text-align:center;top:578.11px;font-size:9.2px;color:#222;letter-spacing:0.4px">Cores Claras</div>
<div class="t" style="left:353px;width:50px;text-align:center;top:578.11px;font-size:9.2px;color:#222;letter-spacing:0.4px">80</div>
<div class="t " style="left:405px;top:578.11px;font-size:9.2px;color:#111;font-weight:normal;letter-spacing:0.5px">CoresClaras2</div>
<div class="t " style="left:19px;top:601.11px;font-size:9.2px;color:#111;font-weight:normal;letter-spacing:0.5px">Colorido Sub 1</div>
<div class="t" style="left:152px;width:82px;text-align:center;top:601.11px;font-size:9.2px;color:#222;letter-spacing:0.4px">Relatório</div>
<div class="t" style="left:234px;width:119px;text-align:center;top:601.11px;font-size:9.2px;color:#222;letter-spacing:0.4px">Colorido</div>
<div class="t" style="left:353px;width:50px;text-align:center;top:601.11px;font-size:9.2px;color:#222;letter-spacing:0.4px">90</div>
<div class="t " style="left:405px;top:601.11px;font-size:9.2px;color:#111;font-weight:normal;letter-spacing:0.5px">ColoridoS1</div>
<div class="t " style="left:19px;top:623.11px;font-size:9.2px;color:#111;font-weight:normal;letter-spacing:0.5px">Colorido Sub 2</div>
<div class="t" style="left:152px;width:82px;text-align:center;top:623.11px;font-size:9.2px;color:#222;letter-spacing:0.4px">Zoom +</div>
<div class="t" style="left:234px;width:119px;text-align:center;top:623.11px;font-size:9.2px;color:#222;letter-spacing:0.4px">Colorido</div>
<div class="t" style="left:353px;width:50px;text-align:center;top:623.11px;font-size:9.2px;color:#222;letter-spacing:0.4px">100</div>
<div class="t " style="left:405px;top:623.11px;font-size:9.2px;color:#111;font-weight:normal;letter-spacing:0.5px">ColoridoS2</div>
<div class="a" style="left:557px;top:389px;width:302px;height:28px;background:#1faae4;"></div>
<div class="t " style="left:594.7px;top:397.64px;font-size:12px;color:#fff;font-weight:normal;">CAIXA DE TEXTO PARA MENU SUPERIOR</div>
<div class="a" style="left:557px;top:420px;width:277px;height:26px;background:#62a29c;"></div>
<div class="t " style="left:594.7px;top:428.19px;font-size:11px;color:#fff;font-weight:normal;">CAIXA DE TEXTO PARA MENU INFERIOR</div>
<div class="a" style="left:557px;top:449px;width:327px;height:28px;background:#62a29c;"></div>
<div class="t " style="left:595px;top:458.73px;font-size:11.9px;color:#fff;font-weight:normal;">CAIXA DE TEXTO SUPERIOR COM DESTAQUE</div>
<div class="a" style="left:557px;top:480px;width:299px;height:26px;background:#2d4f4f;"></div>
<div class="t " style="left:595px;top:488.77px;font-size:10.9px;color:#fff;font-weight:normal;">CAIXA DE TEXTO INFERIOR COM DESTAQUE</div>
<div class="t " style="left:596.4px;top:531.84px;font-size:13.3px;color:#111;font-weight:normal;">Cor Barra Superior</div>
<div class="a" style="left:721px;top:527px;width:65px;height:21px;background:#1faae4;"></div>
<div class="t " style="left:596.4px;top:571.74px;font-size:13.3px;color:#111;font-weight:normal;">Cor Barra Inferior</div>
<div class="a" style="left:721px;top:567px;width:65px;height:21px;background:#62a29c;"></div>
<div class="a" style="left:0px;top:686px;width:19px;height:21px;background:transparent;border-top:2px solid #1f6b42;border-right:2px solid #1f6b42;border-left:1px solid #1f6b42"></div>
<div class="a" style="left:15px;top:705px;width:5px;height:2px;background:#1f5a3a;"></div>
<div class="a" style="left:1099px;top:201px;width:14px;height:505px;background:#dadada;"></div>
<div class="a" style="left:1099px;top:201px;width:14px;height:467px;background:#fff;border:1px solid #ababab"></div>
<div class="a" style="left:1099px;top:215px;width:14px;height:1px;background:#ababab;"></div>
<svg class="a" style="left:1102px;top:206px" width="8" height="5" viewBox="0 0 8 5"><path d="M0 4.5H8L4 0.5Z" fill="#555"/></svg>
<div class="a" style="left:1099px;top:692px;width:14px;height:14px;background:#fff;border:1px solid #c8c8c8"></div>
<svg class="a" style="left:1102px;top:697px" width="8" height="5" viewBox="0 0 8 5"><path d="M0 0.5H8L4 4.5Z" fill="#555"/></svg>
<div class="a" style="left:0px;top:707px;width:1114px;height:24px;background:#e6e6e6;"></div>
<div class="a" style="left:0px;top:707px;width:1095px;height:1px;background:#9a9a9a;"></div>
<svg class="a" style="left:25.5px;top:716px" width="5" height="8" viewBox="0 0 5 8"><path d="M4.5 0L0 4L4.5 8Z" fill="#444"/></svg>
<svg class="a" style="left:54px;top:716px" width="5" height="8" viewBox="0 0 5 8"><path d="M0.5 0L5 4L0.5 8Z" fill="#444"/></svg>
<div class="a" style="left:80px;top:723px;width:2px;height:2px;background:#333;"></div>
<div class="a" style="left:84px;top:723px;width:2px;height:2px;background:#333;"></div>
<div class="a" style="left:88px;top:723px;width:2px;height:2px;background:#333;"></div>
<div class="a" style="left:99px;top:711px;width:1px;height:20px;background:#bdbdbd;"></div>
<div class="a" style="left:216px;top:711px;width:1px;height:20px;background:#bdbdbd;"></div>
<div class="a" style="left:318px;top:711px;width:1px;height:20px;background:#bdbdbd;"></div>
<div class="a" style="left:421px;top:707px;width:91px;height:24px;background:#fff;border-left:1px solid #bdbdbd;border-right:1px solid #bdbdbd"></div>
<div class="a" style="left:421px;top:729px;width:91px;height:2px;background:#217346;"></div>
<div class="t " style="left:111.6px;top:715.38px;font-size:11.6px;color:#4a4a4a;font-weight:normal;letter-spacing:0.3px">CoresEscurasS3</div>
<div class="t " style="left:228px;top:715.38px;font-size:11.6px;color:#4a4a4a;font-weight:normal;letter-spacing:0.5px">CoresClaras1</div>
<div class="t " style="left:330px;top:715.38px;font-size:11.6px;color:#4a4a4a;font-weight:normal;letter-spacing:0.5px">CoresClaras2</div>
<div class="t " style="left:432.5px;top:715.38px;font-size:11.6px;color:#217346;font-weight:bold;letter-spacing:0.45px">ColoridoS1</div>
<div class="t " style="left:524.8px;top:715.38px;font-size:11.6px;color:#4a4a4a;font-weight:normal;letter-spacing:0.6px">ColoridoS2</div>
<div class="a" style="left:610px;top:723px;width:2px;height:2px;background:#1d5c3a;"></div>
<div class="a" style="left:614px;top:723px;width:2px;height:2px;background:#1d5c3a;"></div>
<div class="a" style="left:618px;top:723px;width:2px;height:2px;background:#1d5c3a;"></div>
<svg class="a" style="left:634px;top:713px" width="17" height="16" viewBox="0 0 17 16"><circle cx="8.2" cy="7.8" r="7.3" fill="none" stroke="#666" stroke-width="1.2"/><path d="M8.2 3.8V11.8M4.2 7.8H12.2" stroke="#555" stroke-width="1.8"/></svg>
<div class="a" style="left:670px;top:715px;width:2px;height:2px;background:#aaa;"></div>
<div class="a" style="left:670px;top:719px;width:2px;height:2px;background:#aaa;"></div>
<div class="a" style="left:670px;top:723px;width:2px;height:2px;background:#aaa;"></div>
<div class="a" style="left:688px;top:714px;width:405px;height:14px;background:#dadada;"></div>
<div class="a" style="left:688px;top:714px;width:14px;height:14px;background:#fff;border:1px solid #ababab"></div>
<svg class="a" style="left:692px;top:717px" width="5" height="8" viewBox="0 0 5 8"><path d="M4.5 0L0.5 4L4.5 8Z" fill="#555"/></svg>
<div class="a" style="left:702px;top:714px;width:353px;height:14px;background:#fff;border:1px solid #ababab"></div>
<div class="a" style="left:1078px;top:714px;width:15px;height:14px;background:#fff;border:1px solid #ababab"></div>
<svg class="a" style="left:1083px;top:717px" width="5" height="8" viewBox="0 0 5 8"><path d="M0.5 0L4.5 4L0.5 8Z" fill="#555"/></svg>
</body></html>
